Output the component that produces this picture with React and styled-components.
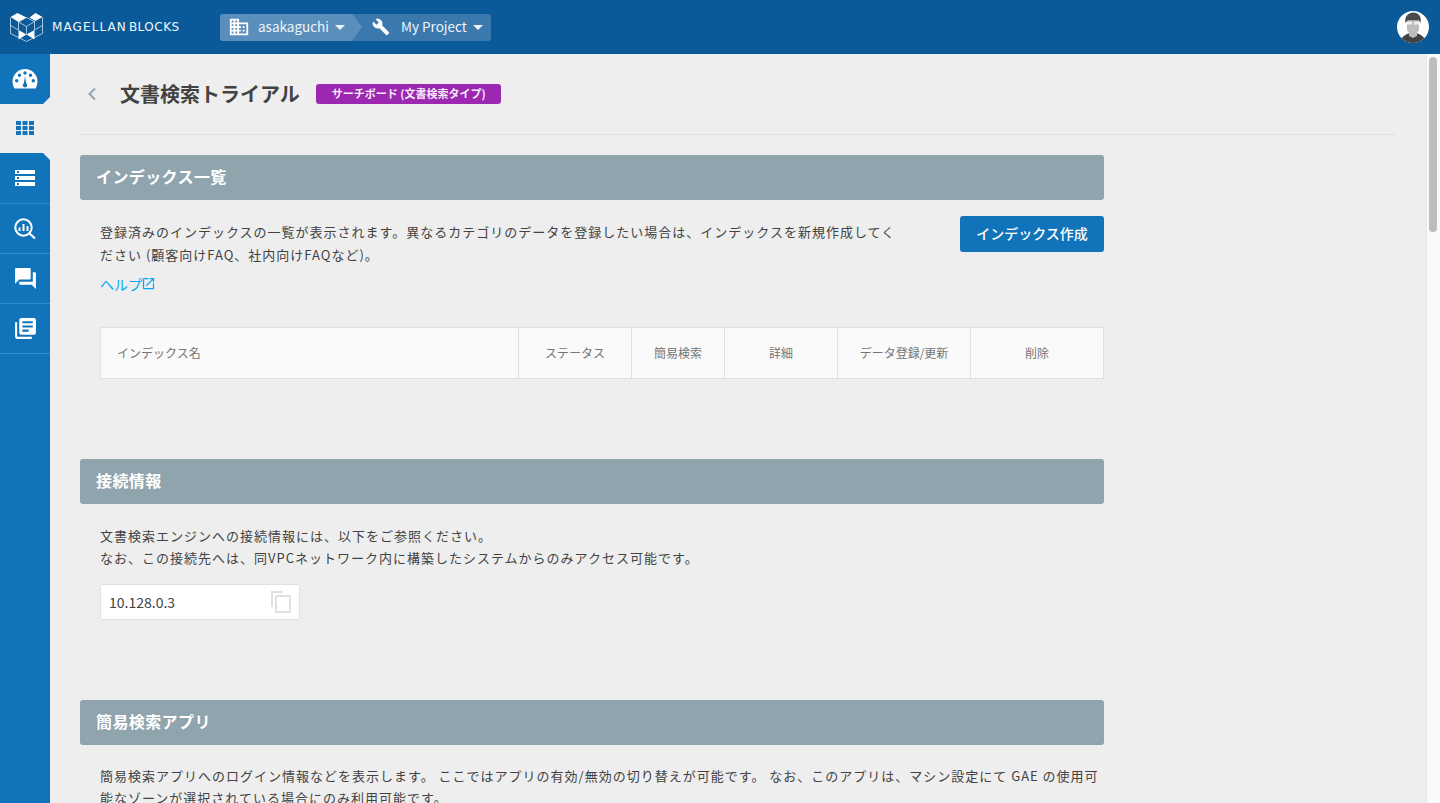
import React from "react";
import styled, { createGlobalStyle } from "styled-components";
import { MdStorage, MdQuestionAnswer, MdLibraryBooks, MdOpenInNew, MdDomain, MdBuild } from "react-icons/md";

const Global = createGlobalStyle`
  html, body { margin: 0; padding: 0; height: 100%; overflow: hidden; }
  body { font-family: "Noto Sans CJK JP", "Noto Sans", sans-serif; color: #424242; background: #eeeeee; }
  * { box-sizing: border-box; }
`;

const Shell = styled.div`
  display: flex;
  flex-direction: column;
  height: 100vh;
`;
const Header = styled.header`
  flex: none;
  height: 54px;
  background: #0a5999;
  display: flex;
  align-items: center;
  padding: 0 11px 0 10px;
`;
const Logo = styled.div`
  display: flex;
  align-items: center;
  width: 210px;
  gap: 9px;
`;
const LogoWord = styled.span`
  font-family: "DejaVu Sans", sans-serif;
  font-size: 12px;
  color: #f2f7fb;
  white-space: nowrap;
  letter-spacing: ${(p) => p.$spacing};
  margin-right: ${(p) => p.$gapAfter || 0};
`;
const LogoText = styled.div`
  display: flex;
  align-items: center;
`;
const Crumbs = styled.nav`
  display: flex;
  height: 27px;
  border-radius: 3px;
  background: #3a78ae;
  color: #eef4f9;
  font-size: 13.5px;
  position: relative;
`;
const Crumb = styled.div`
  display: flex;
  align-items: center;
  height: 100%;
  position: relative;
  padding: ${(p) => p.$padding};
  background: ${(p) => p.$bg || "transparent"};
  border-radius: ${(p) => (p.$first ? "3px 0 0 3px" : "0 3px 3px 0")};
  &::after {
    content: ${(p) => (p.$first ? '""' : "none")};
    position: absolute;
    top: 0;
    left: 100%;
    width: 10px;
    height: 27px;
    background: #5a8fbc;
    clip-path: polygon(0 0, 100% 50%, 0 100%);
  }
`;
const CrumbLabel = styled.span`
  margin: 0 6px 0 ${(p) => p.$ml};
  padding-bottom: 2px;
`;
const Caret = styled.i`
  width: 0;
  height: 0;
  border-left: 5px solid transparent;
  border-right: 5px solid transparent;
  border-top: 5px solid #eef4f9;
`;
const Avatar = styled.svg`
  margin-left: auto;
  width: 32px;
  height: 32px;
  flex: none;
`;
const Body = styled.div`
  flex: 1;
  display: flex;
  min-height: 0;
`;
const Side = styled.aside`
  flex: none;
  width: 50px;
  background: #1173b9;
  display: flex;
  flex-direction: column;
`;
const SideItem = styled.a`
  flex: none;
  height: ${(p) => p.$h || 50}px;
  display: flex;
  align-items: center;
  justify-content: center;
  color: #ffffff;
  padding-bottom: ${(p) => (p.$active ? "2px" : 0)};
  background: ${(p) => (p.$active ? "#eeeeee" : "transparent")};
  border-bottom: ${(p) => (p.$line ? "1px solid #2b8ed4" : "none")};
`;
const SideCorner = styled.div`
  flex: none;
  background: #eeeeee;
`;
const SideTop = styled.div`
  height: ${(p) => p.$h || 50}px;
  background: #1173b9;
  color: #fff;
  display: flex;
  align-items: center;
  justify-content: center;
  border-bottom: ${(p) => (p.$line ? "1px solid #2b8ed4" : "none")};
  clip-path: ${(p) => p.$clip};
`;
const Main = styled.main`
  flex: 1;
  min-width: 0;
  overflow: hidden;
  padding: 0 30px;
`;
const Rail = styled.div`
  flex: none;
  width: 14px;
  background: #fafafa;
  border-left: 1px solid #e8e8e8;
  padding: 3px 3px 0 2px;
`;
const Thumb = styled.div`
  height: 175px;
  border-radius: 4px;
  background: #bdbdbd;
`;
const TitleBar = styled.div`
  height: 81px;
  display: flex;
  align-items: center;
  border-bottom: 1px solid #e0e0e0;
  padding-bottom: 1px;
  margin-bottom: 20px;
`;
const Back = styled.svg`
  width: 10px;
  height: 14px;
  margin: 0 23px 0 7px;
  flex: none;
`;
const Title = styled.h1`
  margin: 0 16px 0 0;
  font-size: 20px;
  font-weight: 700;
  line-height: 1;
  color: #424242;
`;
const Badge = styled.span`
  display: inline-flex;
  align-items: center;
  height: 20px;
  padding: 0 15px 1px 16px;
  border-radius: 3px;
  background: #9c27b0;
  color: #f7eaf9;
  font-size: 11px;
  font-weight: 700;
`;
const Section = styled.section`
  width: 1024px;
  margin-bottom: 80px;
`;
const SectionHead = styled.h2`
  margin: 0;
  height: 45px;
  background: #90a4ae;
  border-radius: 3px;
  padding: 0 16px 3px;
  display: flex;
  align-items: center;
  font-size: 16px;
  font-weight: 700;
  letter-spacing: 0.4px;
  color: #fff;
`;
const SectionBody = styled.div`
  padding-left: 20px;
  padding-top: ${(p) => p.$top}px;
`;
const IntroRow = styled.div`
  display: flex;
  justify-content: space-between;
  align-items: flex-start;
`;
const Para = styled.p`
  margin: 0;
  padding-top: ${(p) => p.$pt || 0}px;
  font-size: 13px;
  line-height: ${(p) => p.$lh || 22}px;
  letter-spacing: 1px;
  color: #424242;
  width: ${(p) => p.$w || "auto"};
`;
const PrimaryButton = styled.button`
  flex: none;
  width: 144px;
  height: 36px;
  padding: 0 0 3px;
  border: 0;
  border-radius: 3px;
  background: #1173b9;
  color: #fff;
  font: 500 14px "Noto Sans CJK JP", sans-serif;
`;
const HelpLink = styled.a`
  display: inline-flex;
  align-items: flex-start;
  margin-top: 8px;
  color: #03a9f4;
  font-size: 14px;
  line-height: 20px;
  svg { margin: 2px 0 0 -1px; }
`;
const Table = styled.div`
  display: grid;
  grid-template-columns: 418px 113px 93px 113px 133px 1fr;
  height: 52px;
  margin-top: 32px;
  background: #fafafa;
  border: 1px solid #e0e0e0;
`;
const Th = styled.div`
  display: flex;
  align-items: center;
  justify-content: ${(p) => (p.$left ? "flex-start" : "center")};
  padding: 0 0 1px ${(p) => (p.$left ? "16px" : 0)};
  border-right: ${(p) => (p.$last ? 0 : "1px solid #e0e0e0")};
  font-size: 12px;
  color: #757575;
`;
const CopyField = styled.div`
  display: flex;
  align-items: center;
  justify-content: space-between;
  width: 200px;
  height: 36px;
  margin-top: 15px;
  padding: 0 8px;
  background: #fff;
  border: 1px solid #e0e0e0;
  border-radius: 2px;
  font-size: 14px;
  color: #424242;
`;
const SideIconWrap = styled.span`
  display: flex;
  color: #fff;
`;

const Columns = ["ステータス", "簡易検索", "詳細", "データ登録/更新", "削除"];

export default function App() {
  return (
    <Shell>
      <Global />
      <Header>
        <Logo>
          <svg width="33" height="30" viewBox="9.5 13.5 33 30" fill="none">
            <path d="M10 18.5L17 14.5L26 19L18 23.5Z M29 19L35 14.5L42 18.5L35 22.5Z M18 31.5L26 36L18 41Z M34 31.5L26 36L34 41Z" fill="#fff" />
            <path d="M10 19V35L26 43L42 35V19 M18 23.5L26 19L34 23L26 28Z M18 23.5V31.5 M34 23V31.5 M26 28V36 M10 27L18 31.5 M42 27L34 31.5" stroke="#cfe0ee" strokeWidth="0.8" />
          </svg>
          <LogoText>
            <LogoWord $spacing="1.1px" $gapAfter="2px">MAGELLAN</LogoWord>
            <LogoWord $spacing="0.5px">BLOCKS</LogoWord>
          </LogoText>
        </Logo>
        <Crumbs>
          <Crumb $first $bg="#5a8fbc" $padding="0 7px 0 8px">
            <MdDomain size={22} color="#fff" />
            <CrumbLabel $ml="8px">asakaguchi</CrumbLabel>
            <Caret />
          </Crumb>
          <Crumb $padding="0 8px 0 20px">
            <MdBuild size={18} color="#fff" />
            <CrumbLabel $ml="11px">My Project</CrumbLabel>
            <Caret />
          </Crumb>
        </Crumbs>
        <Avatar viewBox="0 0 32 32">
          <defs>
            <clipPath id="av"><circle cx="16" cy="16" r="16" /></clipPath>
          </defs>
          <g clipPath="url(#av)">
            <rect width="32" height="32" fill="#fff" />
            <path d="M3 32C4 25 10 22 16 22S28 25 29 32Z" fill="#424242" />
            <path d="M10 10H22V19L20 22V25L16 27L12 25V22L10 19Z" fill="#bdbdbd" />
            <path d="M8.500 12C7 5 12 1.500 16.500 1.500S25 5 23.500 12L22 9.500H10.500Z" fill="#4a4a4a" />
            <path d="M10 10.500H15V13.500H10Z M17 10.500H22V13.500H17Z" fill="#efefef" />
          </g>
        </Avatar>
      </Header>
      <Body>
        <Side>
          <SideCorner>
            <SideTop $clip="polygon(0 0, 100% 0, 100% 43px, 43px 100%, 0 100%)">
              <svg width="26" height="22" viewBox="0 0 26 22">
                <path fillRule="evenodd" fill="#fff" d="M13 1A12.500 12.500 0 0 0 .5 13.500C.5 16 1.300 18.500 2.500 20.500H23.500C24.700 18.500 25.500 16 25.500 13.500A12.500 12.500 0 0 0 13 1ZM4.700 14.500A1.700 1.700 0 1 1 4.700 11.100A1.700 1.700 0 0 1 4.700 14.500ZM7.500 9A1.700 1.700 0 1 1 7.500 5.600A1.700 1.700 0 0 1 7.500 9ZM13 6.700A1.700 1.700 0 1 1 13 3.300A1.700 1.700 0 0 1 13 6.700ZM18.500 9A1.700 1.700 0 1 1 18.500 5.600A1.700 1.700 0 0 1 18.500 9ZM21.300 14.500A1.700 1.700 0 1 1 21.300 11.100A1.700 1.700 0 0 1 21.300 14.500ZM13 19.500A2.300 2.300 0 0 1 11.900 15.200L13 8L14.100 15.200A2.300 2.300 0 0 1 13 19.500Z" />
              </svg>
            </SideTop>
          </SideCorner>
          <SideItem $active $h={49}>
            <svg width="18" height="14" viewBox="0 0 18 14" fill="#1173b9">
              <path d="M0 0h5v4H0z M6.500 0h5v4h-5z M13 0h5v4h-5z M0 5h5v4H0z M6.500 5h5v4h-5z M13 5h5v4h-5z M0 10h5v4H0z M6.500 10h5v4h-5z M13 10h5v4h-5z" />
            </svg>
          </SideItem>
          <SideCorner>
            <SideTop $h={51} $line $clip="polygon(0 0, 43px 0, 100% 7px, 100% 100%, 0 100%)">
              <SideIconWrap><MdStorage size={24} /></SideIconWrap>
            </SideTop>
          </SideCorner>
          <SideItem $line>
            <svg width="24" height="24" viewBox="0 0 24 24" fill="none" stroke="#fff">
              <circle cx="10.500" cy="10.500" r="8.200" strokeWidth="2" />
              <path d="M16.500 16.500L22 21.500" strokeWidth="2.200" />
              <path d="M6.500 10.500V14 M10.500 7V14 M14.500 9V14" strokeWidth="2" />
            </svg>
          </SideItem>
          <SideItem $line><MdQuestionAnswer size={25} /></SideItem>
          <SideItem $line><MdLibraryBooks size={25} /></SideItem>
        </Side>
        <Main>
          <TitleBar>
            <Back viewBox="0 0 10 14" fill="none" stroke="#90a4ae" strokeWidth="2">
              <path d="M8 1.500L2.500 7L8 12.500" />
            </Back>
            <Title>文書検索トライアル</Title>
            <Badge>サーチボード (文書検索タイプ)</Badge>
          </TitleBar>
          <Section>
            <SectionHead>インデックス一覧</SectionHead>
            <SectionBody $top={16}>
              <IntroRow>
                <Para $pt={5} $lh={22.5} $w="806px">登録済みのインデックスの一覧が表示されます。異なるカテゴリのデータを登録したい場合は、インデックスを新規作成してください (顧客向けFAQ、社内向けFAQなど)。</Para>
                <PrimaryButton>インデックス作成</PrimaryButton>
              </IntroRow>
              <HelpLink>ヘルプ<MdOpenInNew size={15} /></HelpLink>
              <Table>
                <Th $left>インデックス名</Th>
                {Columns.map((c, i) => (
                  <Th key={c} $last={i === Columns.length - 1}>{c}</Th>
                ))}
              </Table>
            </SectionBody>
          </Section>
          <Section>
            <SectionHead>接続情報</SectionHead>
            <SectionBody $top={21}>
              <Para>文書検索エンジンへの接続情報には、以下をご参照ください。<br />なお、この接続先へは、同VPCネットワーク内に構築したシステムからのみアクセス可能です。</Para>
              <CopyField>
                10.128.0.3
                <svg width="20" height="22" viewBox="0 0 20 22" fill="none" stroke="#e0e0e0" strokeWidth="2">
                  <path d="M1 16V1H12" />
                  <rect x="5" y="5" width="14" height="16" rx="1" />
                </svg>
              </CopyField>
            </SectionBody>
          </Section>
          <Section>
            <SectionHead>簡易検索アプリ</SectionHead>
            <SectionBody $top={20}>
              <Para>簡易検索アプリへのログイン情報などを表示します。 ここではアプリの有効/無効の切り替えが可能です。 なお、このアプリは、マシン設定にて GAE の使用可能なゾーンが選択されている場合にのみ利用可能です。</Para>
            </SectionBody>
          </Section>
        </Main>
        <Rail><Thumb /></Rail>
      </Body>
    </Shell>
  );
}
